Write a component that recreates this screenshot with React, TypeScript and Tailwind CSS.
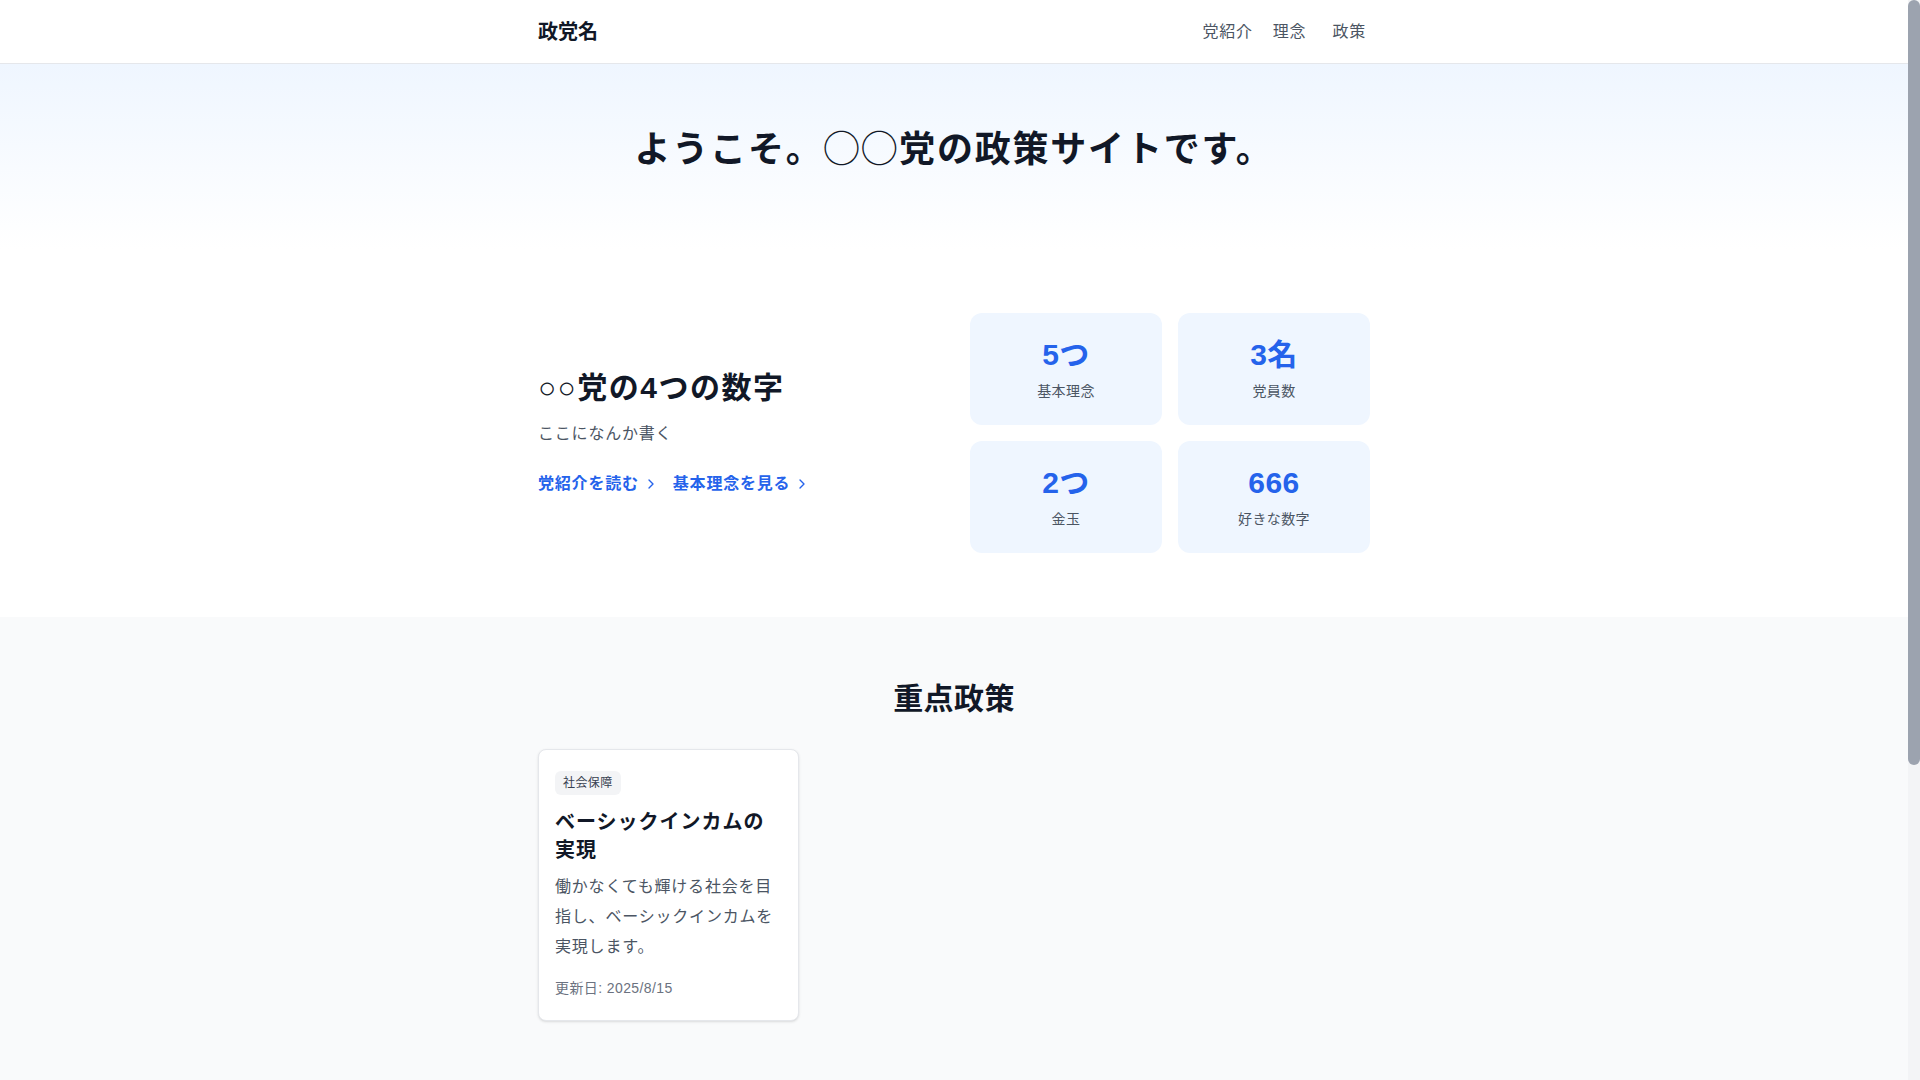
import { ChevronRight } from "lucide-react";

const stats = [
  { value: "5つ", label: "基本理念" },
  { value: "3名", label: "党員数" },
  { value: "2つ", label: "金玉" },
  { value: "666", label: "好きな数字" },
];

export default function App() {
  return (
    <div className="flex h-screen bg-white font-['Liberation_Sans','Noto_Sans_CJK_JP',sans-serif] tracking-wide text-[#111827]">
      <div className="flex-1 overflow-y-auto [scrollbar-width:none]">
        <header className="h-16 border-b border-[#e5e7eb] bg-white">
          <div className="mx-auto flex h-full max-w-4xl items-center justify-between px-8">
            <span className="text-xl font-bold tracking-normal text-[#111827]">政党名</span>
            <nav className="mr-1 flex items-center text-base tracking-wider text-[#4b5563]">
              <a href="#about">党紹介</a>
              <a href="#idea" className="ml-[20px]">理念</a>
              <a href="#policy" className="ml-[26px]">政策</a>
            </nav>
          </div>
        </header>

        <section className="bg-linear-to-b from-[#eff6ff] to-white pt-[66px] pb-[79px] text-center">
          <h1 className="text-4xl font-bold tracking-wider text-[#111827]">ようこそ。◯◯党の政策サイトです。</h1>
        </section>

        <section className="bg-white py-16">
          <div className="mx-auto grid max-w-4xl grid-cols-2 items-center gap-8 px-8">
            <div>
              <h2 className="text-3xl font-bold tracking-wider text-[#111827]">○○党の4つの数字</h2>
              <p className="mt-4 text-base tracking-wider text-[#4b5563]">ここになんか書く</p>
              <div className="mt-[26px] flex items-center gap-[14px] text-base font-bold tracking-wider text-[#2563eb]">
                <a href="#about" className="flex items-center">
                  党紹介を読む
                  <ChevronRight size={16} strokeWidth={2} className="ml-1" />
                </a>
                <a href="#idea" className="flex items-center">
                  基本理念を見る
                  <ChevronRight size={16} strokeWidth={2} className="ml-1" />
                </a>
              </div>
            </div>
            <div className="grid grid-cols-2 gap-4">
              {stats.map((s) => (
                <div key={s.label} className="rounded-xl bg-[#eff6ff] p-6 text-center">
                  <div className="text-3xl font-bold text-[#2563eb]">{s.value}</div>
                  <div className="mt-2 text-sm text-[#4b5563]">{s.label}</div>
                </div>
              ))}
            </div>
          </div>
        </section>

        <section className="bg-[#f9fafb] py-16">
          <div className="mx-auto max-w-4xl px-8">
            <h2 className="mb-8 text-center text-3xl font-bold text-[#111827]">重点政策</h2>
            <div className="grid grid-cols-3 gap-6">
              <div className="rounded-lg border border-[#e5e7eb] bg-white px-4 pt-5 pb-[22px] shadow-sm">
                <span className="inline-block rounded-md bg-[#f3f4f6] px-2 py-1 text-xs text-[#374151]">社会保障</span>
                <h3 className="mt-[13px] text-xl leading-7 font-bold tracking-wider text-[#111827]">ベーシックインカムの実現</h3>
                <p className="mt-2 text-base leading-[30px] tracking-wider text-[#4b5563]">
                  働かなくても輝ける社会を目指し、ベーシックインカムを実現します。
                </p>
                <p className="mt-4 text-sm text-[#6b7280]">更新日: 2025/8/15</p>
              </div>
            </div>
          </div>
        </section>

        <footer className="h-[444px] bg-[#f9fafb]"></footer>
      </div>
      <div className="w-3 shrink-0 bg-[#f3f4f6]">
        <div className="h-[765px] rounded-full bg-[#9ca3af]"></div>
      </div>
    </div>
  );
}
